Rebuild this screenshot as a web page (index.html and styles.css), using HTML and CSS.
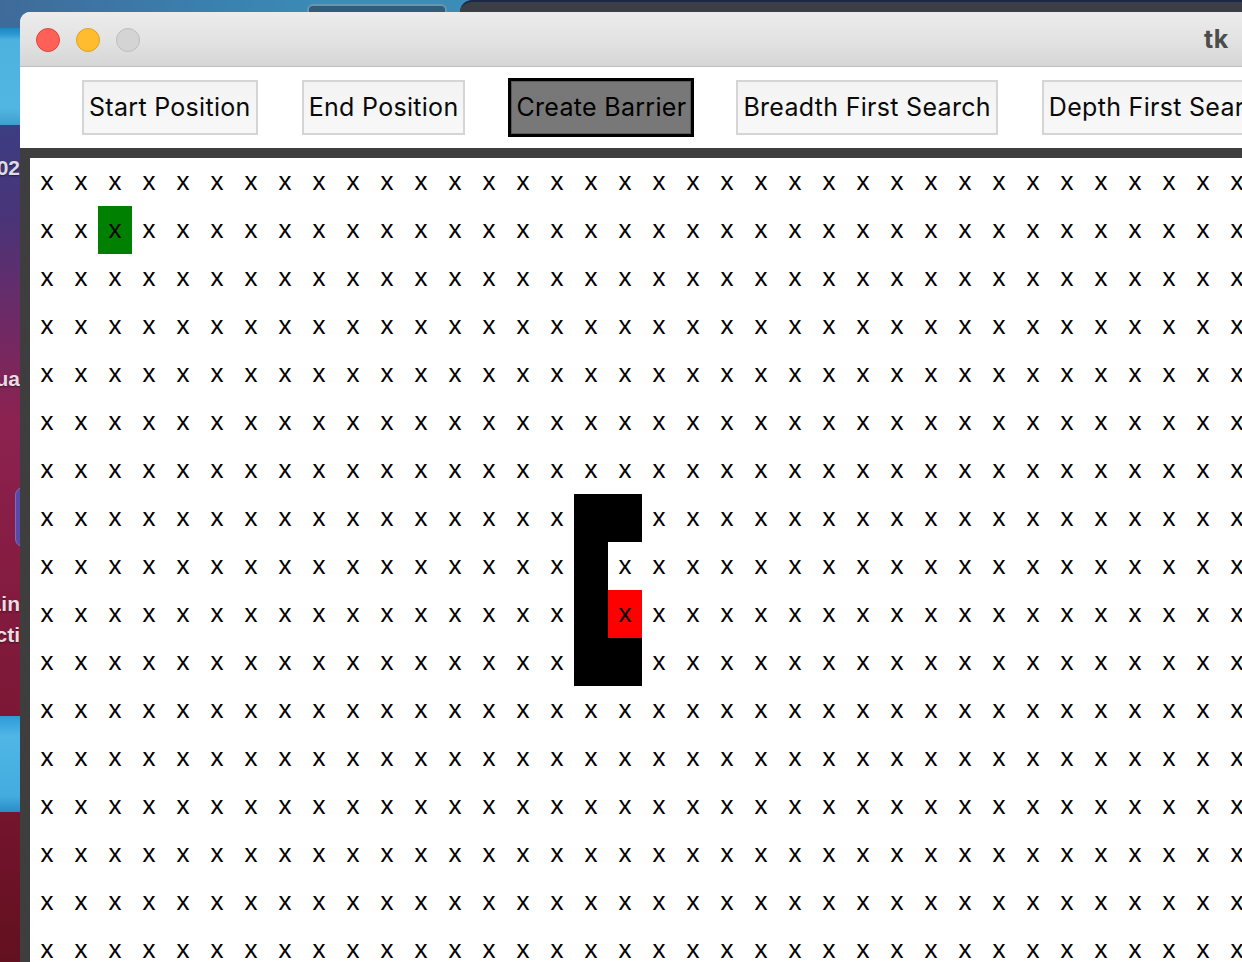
FILE: index.html
```html
<!DOCTYPE html>
<html>
<head>
<meta charset="utf-8">
<title>tk</title>
<link rel="stylesheet" href="styles.css">
</head>
<body>
<div class="desktop">
  <div class="dock-panel"></div>
  <div class="desk-folder"></div>
  <div class="desk-tab"></div>
  <div class="back-window"></div>
  <span class="desk-label l1">202</span>
  <span class="desk-label l2">Visua</span>
  <span class="desk-label l3">Lin</span>
  <span class="desk-label l4">Acti</span>
  <div class="small-pill"></div>
  <div class="blue-icon"></div>
</div>

<div class="window">
  <div class="titlebar">
    <div class="lights">
      <span class="light red"></span>
      <span class="light yellow"></span>
      <span class="light gray"></span>
    </div>
    <div class="title">tk</div>
  </div>

  <div class="toolbar">
    <button class="btn">Start Position</button>
    <button class="btn">End Position</button>
    <button class="btn pressed">Create Barrier</button>
    <button class="btn">Breadth First Search</button>
    <button class="btn">Depth First Search</button>
  </div>

  <div class="main">
    <div class="canvas">
<span>x</span><span>x</span><span>x</span><span>x</span><span>x</span><span>x</span><span>x</span><span>x</span><span>x</span><span>x</span><span>x</span><span>x</span><span>x</span><span>x</span><span>x</span><span>x</span><span>x</span><span>x</span><span>x</span><span>x</span><span>x</span><span>x</span><span>x</span><span>x</span><span>x</span><span>x</span><span>x</span><span>x</span><span>x</span><span>x</span><span>x</span><span>x</span><span>x</span><span>x</span><span>x</span><span>x</span>
<span>x</span><span>x</span><span class="start">x</span><span>x</span><span>x</span><span>x</span><span>x</span><span>x</span><span>x</span><span>x</span><span>x</span><span>x</span><span>x</span><span>x</span><span>x</span><span>x</span><span>x</span><span>x</span><span>x</span><span>x</span><span>x</span><span>x</span><span>x</span><span>x</span><span>x</span><span>x</span><span>x</span><span>x</span><span>x</span><span>x</span><span>x</span><span>x</span><span>x</span><span>x</span><span>x</span><span>x</span>
<span>x</span><span>x</span><span>x</span><span>x</span><span>x</span><span>x</span><span>x</span><span>x</span><span>x</span><span>x</span><span>x</span><span>x</span><span>x</span><span>x</span><span>x</span><span>x</span><span>x</span><span>x</span><span>x</span><span>x</span><span>x</span><span>x</span><span>x</span><span>x</span><span>x</span><span>x</span><span>x</span><span>x</span><span>x</span><span>x</span><span>x</span><span>x</span><span>x</span><span>x</span><span>x</span><span>x</span>
<span>x</span><span>x</span><span>x</span><span>x</span><span>x</span><span>x</span><span>x</span><span>x</span><span>x</span><span>x</span><span>x</span><span>x</span><span>x</span><span>x</span><span>x</span><span>x</span><span>x</span><span>x</span><span>x</span><span>x</span><span>x</span><span>x</span><span>x</span><span>x</span><span>x</span><span>x</span><span>x</span><span>x</span><span>x</span><span>x</span><span>x</span><span>x</span><span>x</span><span>x</span><span>x</span><span>x</span>
<span>x</span><span>x</span><span>x</span><span>x</span><span>x</span><span>x</span><span>x</span><span>x</span><span>x</span><span>x</span><span>x</span><span>x</span><span>x</span><span>x</span><span>x</span><span>x</span><span>x</span><span>x</span><span>x</span><span>x</span><span>x</span><span>x</span><span>x</span><span>x</span><span>x</span><span>x</span><span>x</span><span>x</span><span>x</span><span>x</span><span>x</span><span>x</span><span>x</span><span>x</span><span>x</span><span>x</span>
<span>x</span><span>x</span><span>x</span><span>x</span><span>x</span><span>x</span><span>x</span><span>x</span><span>x</span><span>x</span><span>x</span><span>x</span><span>x</span><span>x</span><span>x</span><span>x</span><span>x</span><span>x</span><span>x</span><span>x</span><span>x</span><span>x</span><span>x</span><span>x</span><span>x</span><span>x</span><span>x</span><span>x</span><span>x</span><span>x</span><span>x</span><span>x</span><span>x</span><span>x</span><span>x</span><span>x</span>
<span>x</span><span>x</span><span>x</span><span>x</span><span>x</span><span>x</span><span>x</span><span>x</span><span>x</span><span>x</span><span>x</span><span>x</span><span>x</span><span>x</span><span>x</span><span>x</span><span>x</span><span>x</span><span>x</span><span>x</span><span>x</span><span>x</span><span>x</span><span>x</span><span>x</span><span>x</span><span>x</span><span>x</span><span>x</span><span>x</span><span>x</span><span>x</span><span>x</span><span>x</span><span>x</span><span>x</span>
<span>x</span><span>x</span><span>x</span><span>x</span><span>x</span><span>x</span><span>x</span><span>x</span><span>x</span><span>x</span><span>x</span><span>x</span><span>x</span><span>x</span><span>x</span><span>x</span><span class="wall">x</span><span class="wall">x</span><span>x</span><span>x</span><span>x</span><span>x</span><span>x</span><span>x</span><span>x</span><span>x</span><span>x</span><span>x</span><span>x</span><span>x</span><span>x</span><span>x</span><span>x</span><span>x</span><span>x</span><span>x</span>
<span>x</span><span>x</span><span>x</span><span>x</span><span>x</span><span>x</span><span>x</span><span>x</span><span>x</span><span>x</span><span>x</span><span>x</span><span>x</span><span>x</span><span>x</span><span>x</span><span class="wall">x</span><span>x</span><span>x</span><span>x</span><span>x</span><span>x</span><span>x</span><span>x</span><span>x</span><span>x</span><span>x</span><span>x</span><span>x</span><span>x</span><span>x</span><span>x</span><span>x</span><span>x</span><span>x</span><span>x</span>
<span>x</span><span>x</span><span>x</span><span>x</span><span>x</span><span>x</span><span>x</span><span>x</span><span>x</span><span>x</span><span>x</span><span>x</span><span>x</span><span>x</span><span>x</span><span>x</span><span class="wall">x</span><span class="end">x</span><span>x</span><span>x</span><span>x</span><span>x</span><span>x</span><span>x</span><span>x</span><span>x</span><span>x</span><span>x</span><span>x</span><span>x</span><span>x</span><span>x</span><span>x</span><span>x</span><span>x</span><span>x</span>
<span>x</span><span>x</span><span>x</span><span>x</span><span>x</span><span>x</span><span>x</span><span>x</span><span>x</span><span>x</span><span>x</span><span>x</span><span>x</span><span>x</span><span>x</span><span>x</span><span class="wall">x</span><span class="wall">x</span><span>x</span><span>x</span><span>x</span><span>x</span><span>x</span><span>x</span><span>x</span><span>x</span><span>x</span><span>x</span><span>x</span><span>x</span><span>x</span><span>x</span><span>x</span><span>x</span><span>x</span><span>x</span>
<span>x</span><span>x</span><span>x</span><span>x</span><span>x</span><span>x</span><span>x</span><span>x</span><span>x</span><span>x</span><span>x</span><span>x</span><span>x</span><span>x</span><span>x</span><span>x</span><span>x</span><span>x</span><span>x</span><span>x</span><span>x</span><span>x</span><span>x</span><span>x</span><span>x</span><span>x</span><span>x</span><span>x</span><span>x</span><span>x</span><span>x</span><span>x</span><span>x</span><span>x</span><span>x</span><span>x</span>
<span>x</span><span>x</span><span>x</span><span>x</span><span>x</span><span>x</span><span>x</span><span>x</span><span>x</span><span>x</span><span>x</span><span>x</span><span>x</span><span>x</span><span>x</span><span>x</span><span>x</span><span>x</span><span>x</span><span>x</span><span>x</span><span>x</span><span>x</span><span>x</span><span>x</span><span>x</span><span>x</span><span>x</span><span>x</span><span>x</span><span>x</span><span>x</span><span>x</span><span>x</span><span>x</span><span>x</span>
<span>x</span><span>x</span><span>x</span><span>x</span><span>x</span><span>x</span><span>x</span><span>x</span><span>x</span><span>x</span><span>x</span><span>x</span><span>x</span><span>x</span><span>x</span><span>x</span><span>x</span><span>x</span><span>x</span><span>x</span><span>x</span><span>x</span><span>x</span><span>x</span><span>x</span><span>x</span><span>x</span><span>x</span><span>x</span><span>x</span><span>x</span><span>x</span><span>x</span><span>x</span><span>x</span><span>x</span>
<span>x</span><span>x</span><span>x</span><span>x</span><span>x</span><span>x</span><span>x</span><span>x</span><span>x</span><span>x</span><span>x</span><span>x</span><span>x</span><span>x</span><span>x</span><span>x</span><span>x</span><span>x</span><span>x</span><span>x</span><span>x</span><span>x</span><span>x</span><span>x</span><span>x</span><span>x</span><span>x</span><span>x</span><span>x</span><span>x</span><span>x</span><span>x</span><span>x</span><span>x</span><span>x</span><span>x</span>
<span>x</span><span>x</span><span>x</span><span>x</span><span>x</span><span>x</span><span>x</span><span>x</span><span>x</span><span>x</span><span>x</span><span>x</span><span>x</span><span>x</span><span>x</span><span>x</span><span>x</span><span>x</span><span>x</span><span>x</span><span>x</span><span>x</span><span>x</span><span>x</span><span>x</span><span>x</span><span>x</span><span>x</span><span>x</span><span>x</span><span>x</span><span>x</span><span>x</span><span>x</span><span>x</span><span>x</span>
<span>x</span><span>x</span><span>x</span><span>x</span><span>x</span><span>x</span><span>x</span><span>x</span><span>x</span><span>x</span><span>x</span><span>x</span><span>x</span><span>x</span><span>x</span><span>x</span><span>x</span><span>x</span><span>x</span><span>x</span><span>x</span><span>x</span><span>x</span><span>x</span><span>x</span><span>x</span><span>x</span><span>x</span><span>x</span><span>x</span><span>x</span><span>x</span><span>x</span><span>x</span><span>x</span><span>x</span>
    </div>
  </div>
</div>
</body>
</html>
```

FILE: styles.css
```css
html, body {
  margin: 0;
  padding: 0;
}

body {
  width: 1242px;
  height: 962px;
  overflow: hidden;
  position: relative;
  font-family: "Inter", "Liberation Sans", sans-serif;
  background: linear-gradient(180deg, #3f6a98 0px, #3e6c99 28px, #3c3d82 125px, #4a3478 220px, #6e2a66 320px, #8c2250 420px, #861c42 560px, #76152f 800px, #62101f 962px);
}

/* ---------- desktop (free canvas behind the window) ---------- */
.desktop {
  position: absolute;
  inset: 0;
}

.dock-panel {
  position: absolute;
  left: -20px;
  top: 28px;
  width: 60px;
  height: 97px;
  background: linear-gradient(180deg, #1f86c2 0px, #2b97d0 6px, #4eb2df 12px, #52b6e2 80px, #3d9fcf 97px);
}

.desk-folder {
  position: absolute;
  left: 0;
  top: 0;
  width: 310px;
  height: 20px;
  background: linear-gradient(90deg, #3f6b99 0px, #3a7fae 200px, #3a8ab5 310px);
}

.desk-tab {
  position: absolute;
  left: 307px;
  top: 4px;
  width: 136px;
  height: 20px;
  border: 2px solid #6c95ad;
  border-radius: 6px;
  background: #2e5e79;
}

.back-window {
  position: absolute;
  left: 460px;
  top: 0;
  width: 800px;
  height: 30px;
  border-top-left-radius: 12px;
  background: #3b3e44;
  border-top: 2px solid #1c2848;
}

.desktop::before {
  content: "";
  position: absolute;
  left: 300px;
  top: 0;
  width: 170px;
  height: 20px;
  background: #3b8cb6;
}

.desk-label {
  position: absolute;
  right: 1222px;
  font-family: "Liberation Sans", sans-serif;
  font-weight: bold;
  font-size: 21px;
  color: #dcdce6;
  white-space: nowrap;
  text-shadow: 0 1px 2px rgba(0, 0, 0, 0.5);
}

.l1 { top: 156px; }
.l2 { top: 367px; color: #e8dce2; }
.l3 { top: 592px; color: #eadde0; }
.l4 { top: 623px; color: #eadde0; }

.small-pill {
  position: absolute;
  left: 15px;
  top: 487px;
  width: 20px;
  height: 58px;
  border-radius: 8px;
  background: #5a4aa8;
  border: 1px solid #7a6ac8;
}

.blue-icon {
  position: absolute;
  left: -10px;
  top: 716px;
  width: 40px;
  height: 96px;
  border-radius: 10px;
  background: linear-gradient(180deg, #2f9ad8 0px, #4fb6e6 20px, #44acde 80px, #2a8cc6 96px);
}

/* ---------- window ---------- */
.window {
  position: absolute;
  left: 20px;
  top: 12px;
  width: 1260px;
  height: 990px;
  border-top-left-radius: 10px;
  overflow: hidden;
  background: #ffffff;
  display: flex;
  flex-direction: column;
}

.titlebar {
  height: 55px;
  box-sizing: border-box;
  padding-top: 2px;
  flex: none;
  display: flex;
  align-items: center;
  background: linear-gradient(180deg, #ececec 0%, #e2e2e2 55%, #d6d6d6 100%);
  border-bottom: 1px solid #bfbfbf;
}

.lights {
  display: flex;
  gap: 16px;
  padding-left: 16px;
}

.light {
  width: 22px;
  height: 22px;
  border-radius: 50%;
  border: 1px solid transparent;
}

.light.red { background: #fe5f57; border-color: #e0443e; }
.light.yellow { background: #febc2e; border-color: #dea123; }
.light.gray { background: #d4d4d4; border-color: #bdbdbd; }

.title {
  margin-left: 1064px;
  font-family: "Inter", "Liberation Sans", sans-serif;
  font-weight: 700;
  font-size: 25px;
  letter-spacing: 0.5px;
  color: #4c4c4c;
  padding-bottom: 3px;
}

/* ---------- toolbar ---------- */
.toolbar {
  height: 81px;
  flex: none;
  display: flex;
  align-items: center;
  gap: 44px;
  padding-left: 62px;
  background: #ffffff;
  white-space: nowrap;
}

.btn {
  flex: none;
  height: 55px;
  margin: 0;
  padding: 0 5px;
  border: 2px solid #d5d5d5;
  border-radius: 0;
  background: linear-gradient(180deg, #f3f3f3 0%, #f8f8f8 100%);
  font-family: "Inter", "Liberation Sans", sans-serif;
  font-size: 25px;
  letter-spacing: 0.3px;
  color: #0a0a0a;
  line-height: 1;
}

.btn.pressed {
  height: 59px;
  margin: 0 -2px 0 -1px;
  padding: 0 5px;
  border: 3px solid #000000;
  box-shadow: inset 0 0 0 1px #5a5a5a;
  background: #787878;
  color: #000000;
}

/* ---------- canvas ---------- */
.main {
  flex: 1;
  background: #3e3e3e;
  padding: 10px 0 0 10px;
  overflow: hidden;
}

.canvas {
  background: #ffffff;
  display: grid;
  grid-template-columns: repeat(36, 34px);
  grid-auto-rows: 48px;
  width: 1240px;
}

.canvas span {
  display: flex;
  align-items: center;
  justify-content: center;
  font-family: "Liberation Sans", sans-serif;
  font-size: 26px;
  line-height: 1;
  color: #000000;
  padding-bottom: 2px;
  box-sizing: border-box;
}

.canvas .start { background: #008000; }
.canvas .end { background: #ff0000; }
.canvas .wall { background: #000000; }
```
